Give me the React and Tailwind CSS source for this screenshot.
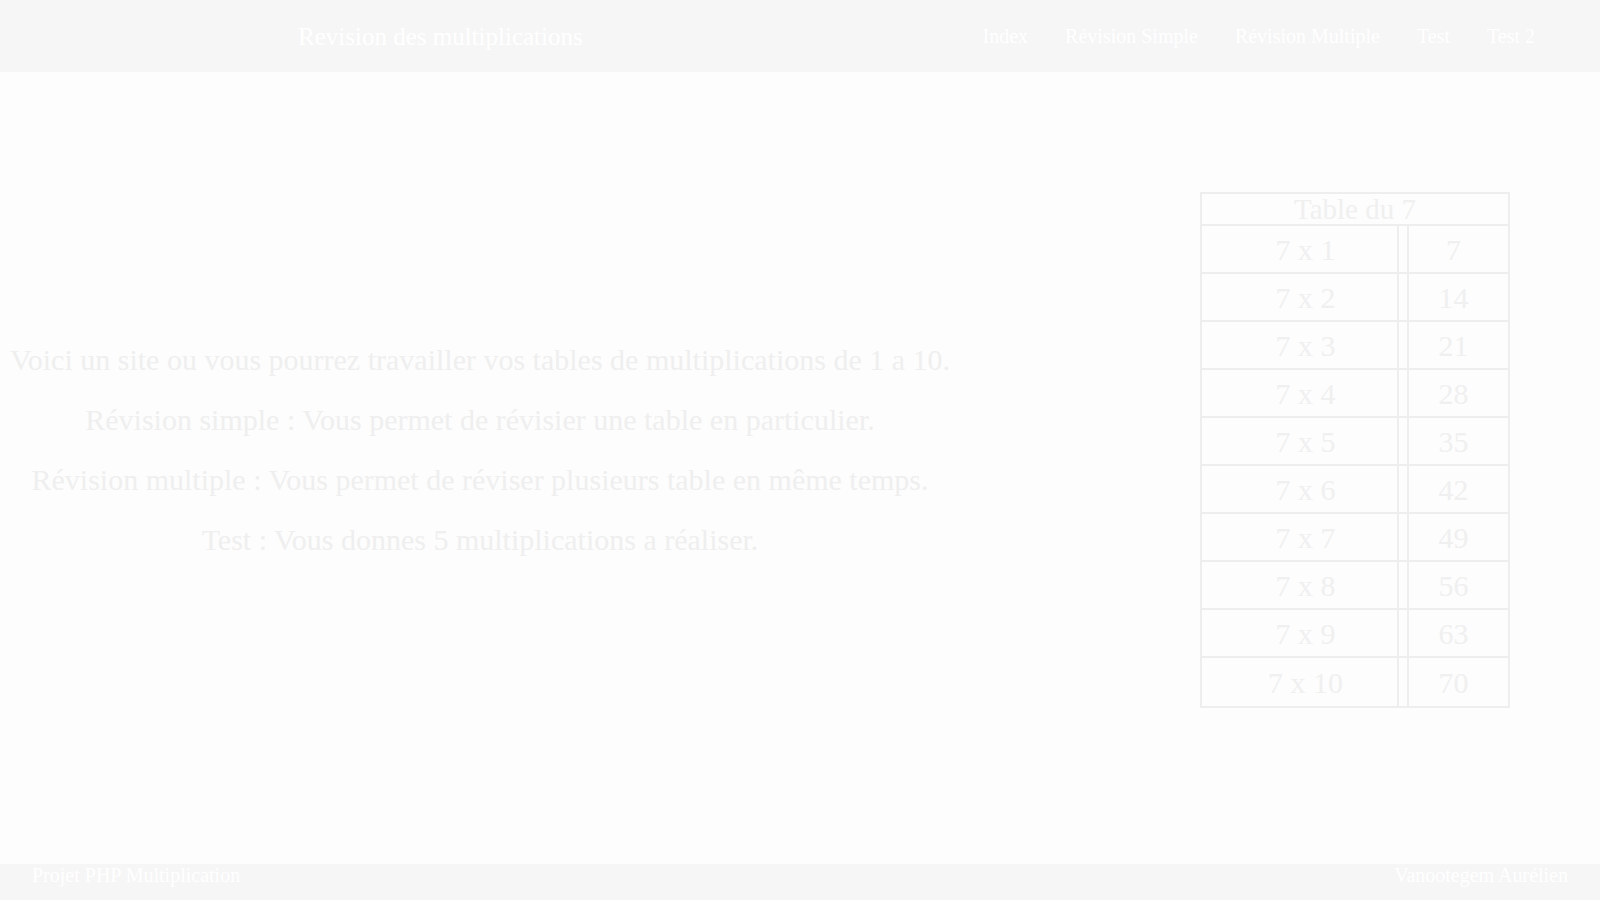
const rows = [1, 2, 3, 4, 5, 6, 7, 8, 9, 10];

const lines = [
  "Voici un site ou vous pourrez travailler vos tables de multiplications de 1 a 10.",
  "Révision simple : Vous permet de révisier une table en particulier.",
  "Révision multiple : Vous permet de réviser plusieurs table en même temps.",
  "Test : Vous donnes 5 multiplications a réaliser.",
];

const links = ["Index", "Révision Simple", "Révision Multiple", "Test", "Test 2"];

function App() {
  return (
    <div className="h-[900px] w-full bg-[#fdfdfd] font-['Liberation_Serif',serif] flex flex-col">
      {/* Header */}
      <header className="h-[72px] bg-[#f6f6f6] flex items-center justify-between pl-[298px] pr-[65px] text-white">
        <h1 className="text-[25px] leading-none">Revision des multiplications</h1>
        <nav className="flex gap-[37px] text-[20px] leading-none">
          {links.map((l) => (
            <a key={l} href="#">
              {l}
            </a>
          ))}
        </nav>
      </header>

      {/* Main */}
      <main className="h-[792px] flex text-[#efefef]">
        <div className="w-[960px] pt-[258px] text-center text-[30px] leading-[60px]">
          {lines.map((t) => (
            <p key={t}>{t}</p>
          ))}
        </div>

        <div className="ml-[240px] mt-[120px] text-[#f0f0f0]">
          <div className="w-[310px] border-2 border-[#eeeeee]">
            <div className="h-[32px] border-b-2 border-[#eeeeee] text-center text-[29px] leading-[30px]">
              Table du 7
            </div>
            {rows.map((n, i) => (
              <div
                key={n}
                className={`h-[48px] flex text-[30px] ${
                  i < rows.length - 1 ? "border-b-2 border-[#eeeeee]" : ""
                }`}
              >
                <div className="w-[197px] pl-[12px] border-r-2 border-[#eeeeee] flex items-center justify-center">
                  7 x {n}
                </div>
                <div className="w-[8px]" />
                <div className="flex-1 pr-[10px] border-l-2 border-[#eeeeee] flex items-center justify-center">
                  {7 * n}
                </div>
              </div>
            ))}
          </div>
        </div>
      </main>

      {/* Footer */}
      <footer className="h-[36px] bg-[#f6f6f6] flex justify-between px-8 text-white text-[20px] leading-[23px]">
        <span>Projet PHP Multiplication</span>
        <span>Vanootegem Aurélien</span>
      </footer>
    </div>
  );
}

export default App;
